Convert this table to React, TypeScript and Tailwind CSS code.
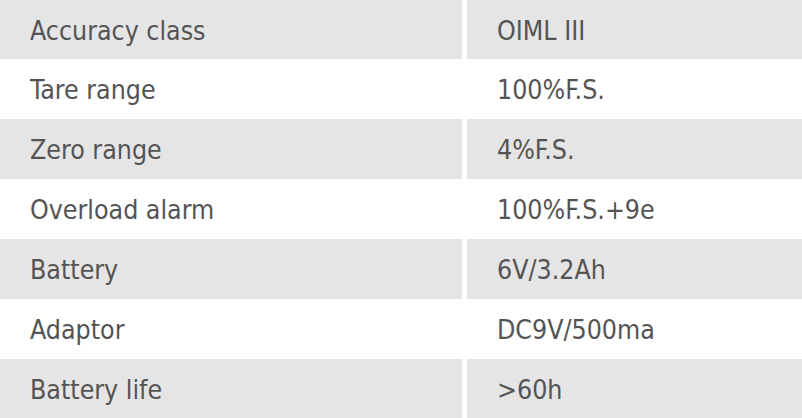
const specs: [string, string][] = [
  ['Accuracy class', 'OIML III'],
  ['Tare range', '100%F.S.'],
  ['Zero range', '4%F.S.'],
  ['Overload alarm', '100%F.S.+9e'],
  ['Battery', '6V/3.2Ah'],
  ['Adaptor', 'DC9V/500ma'],
  ['Battery life', '>60h'],
];

export default function App() {
  return (
    <div className="w-[802px] h-[418px] overflow-hidden bg-white font-['DejaVu_Sans_Condensed','DejaVu_Sans',sans-serif] text-[26.5px] text-[#545454]">
      {specs.map(([label, value], i) => (
        <div
          key={label}
          className={`grid grid-cols-[462px_1fr] gap-x-[5px] ${i === 0 ? 'h-[59px]' : 'h-[60px]'}`}
        >
          <div className={`flex items-center pl-[30px] pt-[2px] ${i % 2 === 0 ? 'bg-[#e5e5e5]' : 'bg-white'}`}>
            {label}
          </div>
          <div className={`flex items-center pl-[30px] pt-[2px] ${i % 2 === 0 ? 'bg-[#e5e5e5]' : 'bg-white'}`}>
            {value}
          </div>
        </div>
      ))}
    </div>
  );
}
